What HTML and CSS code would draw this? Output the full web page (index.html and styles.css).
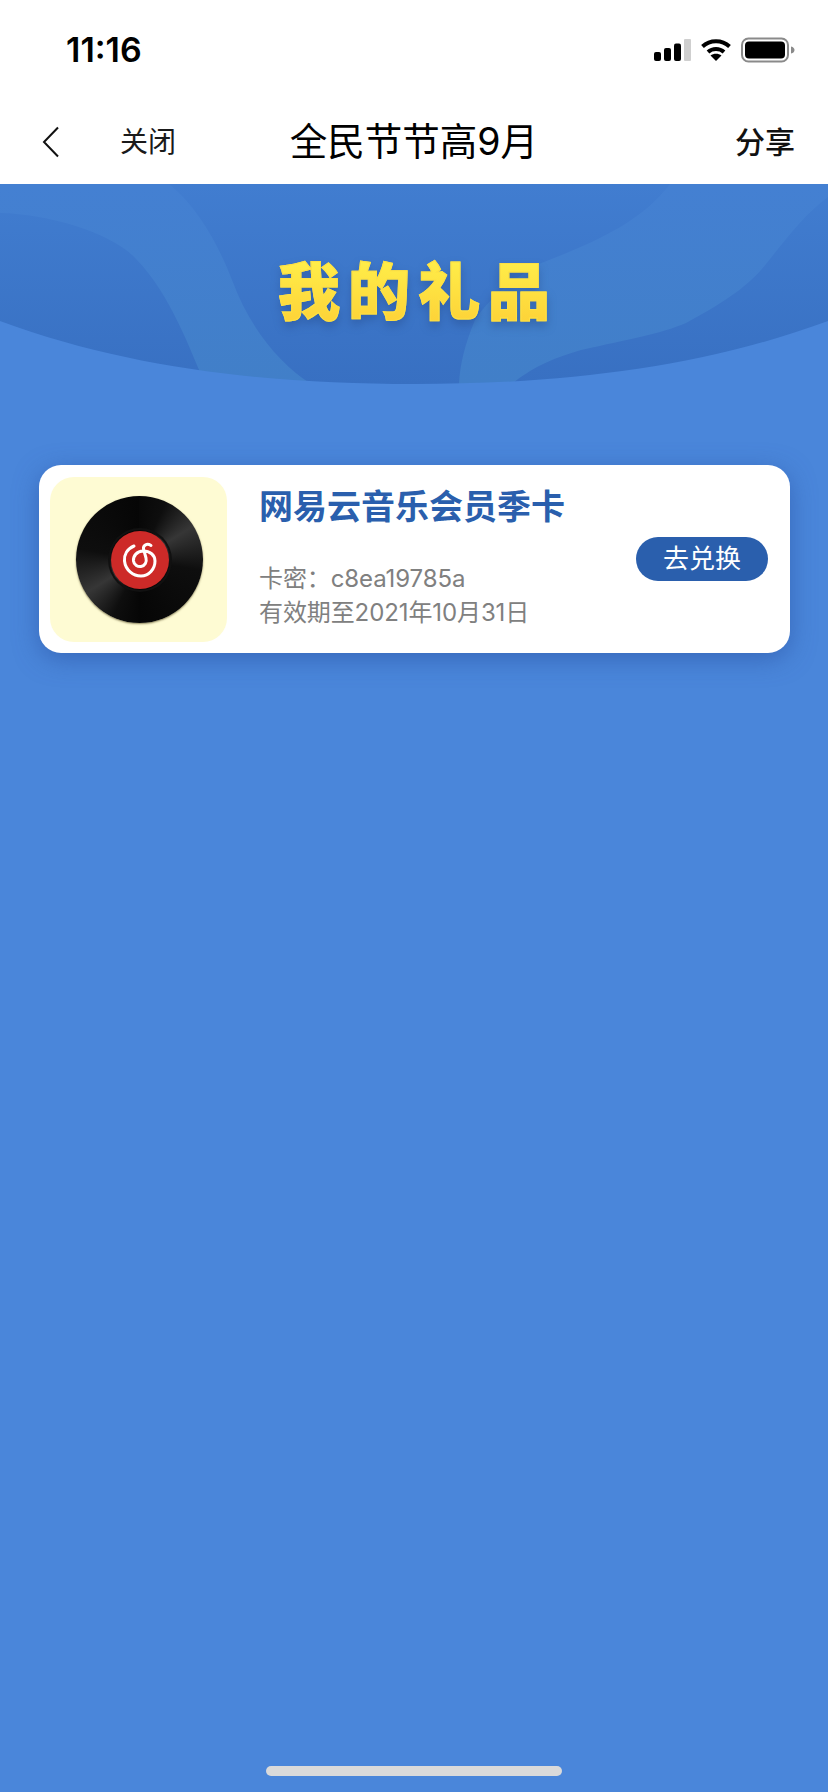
FILE: index.html
```html
<!DOCTYPE html>
<html lang="zh-CN">
<head>
<meta charset="utf-8">
<title>全民节节高9月</title>
<link rel="stylesheet" href="styles.css">
</head>
<body>
<div class="phone">
  <header class="status">
    <span class="time">11:16</span>
    <div class="status-icons">
      <svg class="signal" width="37" height="22" viewBox="0 0 37 22"><rect x="0" y="13" width="7" height="9" rx="2" fill="#000"/><rect x="10" y="9" width="7" height="13" rx="2" fill="#000"/><rect x="20" y="4.500" width="7" height="17.500" rx="2" fill="#000"/><rect x="30" y="0" width="7" height="22" rx="1" fill="#cfcfcf"/></svg>
      <svg class="wifi" width="32" height="24" viewBox="0 0 32 24"><path d="M2.500 8.500C10 1.500 22 1.500 29.500 8.500" fill="none" stroke="#000" stroke-width="4"/><path d="M8 14C12.500 10 19.500 10 24 14" fill="none" stroke="#000" stroke-width="4"/><path d="M16 23L10.500 17.500C13.500 15.300 18.500 15.300 21.500 17.500Z" fill="#000"/></svg>
      <svg class="battery" width="54" height="26" viewBox="0 0 54 26"><rect x="1" y="1.500" width="46" height="23" rx="6.500" fill="none" stroke="#8a8a8a" stroke-width="2"/><rect x="4" y="4.500" width="40" height="17" rx="4" fill="#000"/><path d="M50 9.500C52.500 10 53.500 11.500 53.500 13S52.500 16 50 16.500Z" fill="#8a8a8a"/></svg>
    </div>
  </header>
  <nav class="nav">
    <div class="nav-left">
      <svg class="back" width="20" height="32" viewBox="0 0 20 32"><path d="M17 1.500L3 16L17 30.500" fill="none" stroke="#111" stroke-width="2"/></svg>
      <span class="close">关闭</span>
    </div>
    <h1 class="nav-title">全民节节高9月</h1>
    <span class="share">分享</span>
  </nav>
  <main class="page">
    <section class="hero">
      <svg class="hero-bg" width="828" height="200" viewBox="0 0 828 200">
        <defs>
          <linearGradient id="sky" x1="0" y1="0" x2="0" y2="1"><stop offset="0" stop-color="#417dd0"/><stop offset="1" stop-color="#3870c2"/></linearGradient>
          <linearGradient id="swoosh" x1="0" y1="0" x2="0" y2="1"><stop offset="0" stop-color="#4480d2"/><stop offset="1" stop-color="#417fc8"/></linearGradient>
        </defs>
        <rect width="828" height="200" fill="url(#sky)"/>
        <path d="M0 0H169C200 25 220 65 232 96C250 145 280 180 311 200H205C190 165 170 110 137 76C115 50 50 30 0 29Z" fill="url(#swoosh)"/>
        <path d="M670 0C640 40 590 60 539 80C505 100 485 120 475 136C465 160 460 180 459 200H512C530 185 550 175 581 166C630 155 660 150 686 139C730 115 750 100 766 80C790 50 805 30 828 13V0Z" fill="url(#swoosh)"/>
      </svg>
      <svg class="hero-curve" width="828" height="200" viewBox="0 0 828 200"><path d="M0 137C130 185 270 200 414 200C558 200 698 185 828 137V200H0Z" fill="#4a86da"/></svg>
      <h2 class="hero-title">我的礼品</h2>
    </section>
    <article class="card">
      <div class="cover">
        <div class="disc">
          <svg class="logo" width="60" height="60" viewBox="0 0 60 60">
            <circle cx="30" cy="30" r="29" fill="#cd2a28"/>
            <path d="M24 16C17 19 14 25 14.500 31C15.500 40 23 46 31 46C39 46 45 39 45 31C45 25 40 21 33 21C27 21 23 26 23.500 31C24 35 28 37 31 36.500C35 36 37 32 36 28L33.500 19C33 15 37 13 41 15.500" fill="none" stroke="#fff" stroke-width="3" stroke-linecap="round"/>
          </svg>
        </div>
      </div>
      <div class="info">
        <h3 class="gift-name">网易云音乐会员季卡</h3>
        <p class="gift-meta">卡密：<span class="code">c8ea19785a</span></p>
        <p class="gift-meta">有效期至2021年10月31日</p>
      </div>
      <button class="redeem">去兑换</button>
    </article>
    <div class="home-indicator"></div>
  </main>
</div>
</body>
</html>
```
FILE: styles.css
```css
* { box-sizing: border-box; }
html, body { margin: 0; padding: 0; }
body { font-family: "Inter", "Noto Sans CJK SC", sans-serif; background: #4a86da; }
.phone { width: 828px; height: 1792px; display: flex; flex-direction: column; overflow: hidden; }
.status { height: 92px; background: #fff; display: flex; justify-content: space-between; align-items: flex-start; padding: 30px 33px 0 66px; }
.time { font-size: 34px; line-height: 40px; font-weight: 600; color: #000; letter-spacing: 0; }
.status-icons { display: flex; align-items: center; gap: 9px; padding-top: 7px; }
.nav { height: 92px; background: #fff; display: flex; align-items: center; justify-content: space-between; padding: 8px 33px 0 41px; position: relative; }
.nav-left { display: flex; align-items: center; gap: 59px; }
.close { font-size: 28px; color: #1a1a1a; line-height: 40px; }
.back { flex: none; }
.nav-title { position: absolute; left: 0; right: 0; margin: 0; text-align: center; font-size: 37.500px; line-height: 50px; font-weight: 400; color: #000; }
.share { font-size: 30px; line-height: 40px; font-weight: 500; color: #111; }
.page { flex: 1; display: flex; flex-direction: column; background: #4a86da; }
.hero { height: 200px; position: relative; display: flex; justify-content: center; padding-top: 73px; }
.hero-bg, .hero-curve { position: absolute; left: 0; top: 0; display: block; }
.hero-title { position: relative; margin: 0; height: 72px; font-size: 62px; line-height: 72px; font-weight: 900; letter-spacing: 8px; margin-right: -8px; background: linear-gradient(#ffef4a, #fdd036); -webkit-background-clip: text; background-clip: text; color: transparent; -webkit-text-stroke: 1px #fee043; filter: drop-shadow(0 5px 5px rgba(30,60,120,.35)); }
.card { margin: 81px 38px 0 39px; height: 188px; background: #fff; border-radius: 22px; padding: 12px 22px 11px 11px; display: flex; align-items: stretch; box-shadow: 0 6px 24px rgba(40,80,160,.55); }
.cover { width: 177px; padding-left: 2px; background: #fefbd3; border-radius: 24px; display: flex; align-items: center; justify-content: center; flex: none; }
.disc { width: 127px; height: 127px; border-radius: 50%; display: flex; align-items: center; justify-content: center; background: conic-gradient(from 0deg, #080808 0deg, #0e0e0e 25deg, #363636 58deg, #0e0e0e 100deg, #060606 180deg, #0e0e0e 205deg, #363636 238deg, #0e0e0e 280deg, #060606 360deg); box-shadow: 0 1px 2px rgba(90,80,40,.7); }
.logo { display: block; border-radius: 50%; box-shadow: 0 0 0 2px #111; }
.info { flex: 1; padding: 8px 0 0 32px; }
.gift-name { margin: 0 0 33px; font-size: 34px; line-height: 44px; font-weight: 600; color: #2a5fad; }
.gift-meta { margin: 0; font-size: 24px; line-height: 34px; color: #808080; letter-spacing: -.1px; }
.redeem { align-self: center; margin-top: -1px; flex: none; width: 132px; height: 44px; border: 0; border-radius: 22px; background: #2a5fad; color: #fff; font-family: inherit; font-size: 26px; line-height: 44px; padding: 0; }
.home-indicator { width: 296px; height: 10px; border-radius: 5px; background: #dadada; margin: auto auto 16px; }
```
